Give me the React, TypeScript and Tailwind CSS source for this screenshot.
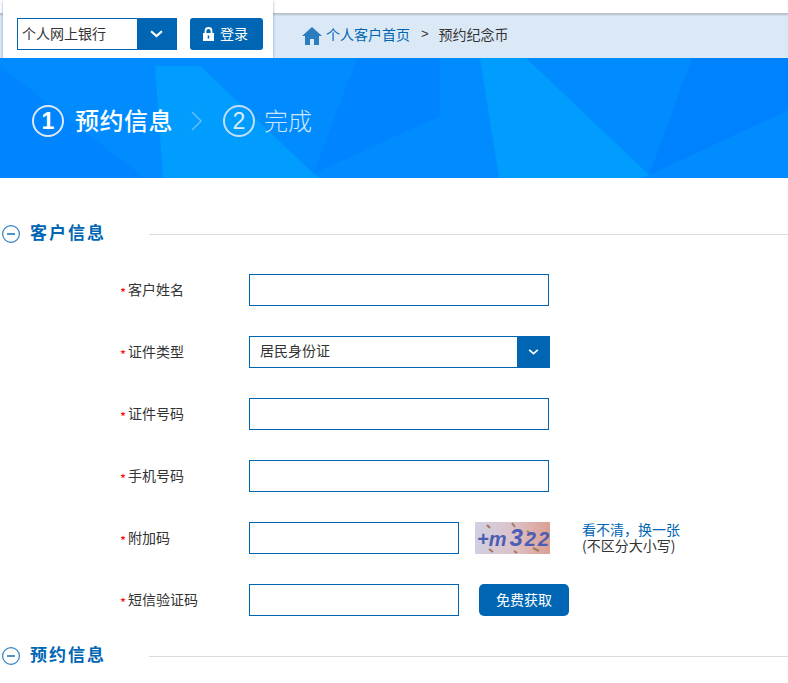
const fontStack = "font-['Noto_Sans_CJK_SC','Liberation_Sans',sans-serif]";

function FieldLabel({ text }: { text: string }) {
  return (
    <div className="flex w-[129px] items-center pb-[2px] text-sm text-[#333]">
      <span className="w-2 pt-[7px] text-[13px] leading-none text-[#f00]">*</span>
      <span>{text}</span>
    </div>
  );
}

function Chevron({ width, height }: { width: number; height: number }) {
  return (
    <svg width={width} height={height} viewBox="0 0 12 7">
      <path d="M1 1l5 4.5L11 1" fill="none" stroke="#fff" strokeWidth="2" />
    </svg>
  );
}

function SectionHead({ title }: { title: string }) {
  return (
    <div className="flex h-8 items-center pl-[2px]">
      <svg width="18" height="18" viewBox="0 0 18 18" className="shrink-0">
        <circle cx="9" cy="9" r="8.4" fill="none" stroke="#2f7fc4" strokeWidth="1.2" />
        <path d="M5 9h8" stroke="#0066b3" strokeWidth="1.4" />
      </svg>
      <h2 className="ml-[10px] w-[119px] pb-[4px] text-[17px] font-bold tracking-[2px] text-[#0066b3]">{title}</h2>
      <div className="h-px flex-1 bg-[#dcdcdc]" />
    </div>
  );
}

function TextInput({ width = 'w-[300px]' }: { width?: string }) {
  return <input className={`h-8 border border-[#0066b3] bg-white outline-none ${width}`} />;
}

function Captcha() {
  return (
    <div className="relative ml-4 h-8 w-[75px] overflow-hidden bg-gradient-to-r from-[#cfd0e2] via-[#dcc2ca] to-[#dc9f92]">
      <svg className="absolute inset-0" width="75" height="32" viewBox="0 0 75 32">
        <path d="M12 3l3 3M37 1l3 4M14 27l4 3M39 29l3 2M58 26l6 3M52 9l5 4" stroke="#a0785a" strokeWidth="2" />
      </svg>
      <div className="relative pl-[2px] font-['Liberation_Sans',sans-serif] text-[20px] leading-8 font-bold whitespace-nowrap text-[#4c5eb4] italic">
        +m<span className="ml-[3px] text-[24px]">3</span>
        <span className="ml-[2px]">2</span>
        <span className="ml-[2px]">2</span>
      </div>
    </div>
  );
}

const banner = [
  { fill: '#0084ff', points: '0,8 145,120 0,120' },
  { fill: '#009dff', points: '155,8 200,8 313,115 320,120 163,120' },
  { fill: '#0084ff', points: '357,0 440,0 440,58 313,116' },
  { fill: '#009dff', points: '480,0 526,0 649,117 640,120 499,120' },
  { fill: '#0082ff', points: '692,0 788,0 788,52 649,117' },
];

export default function App() {
  return (
    <div className={`relative min-h-[683px] w-[788px] overflow-hidden bg-white ${fontStack}`}>
      <header className="pt-[13px]">
        <div className="h-[3px] bg-gradient-to-b from-[#b3b7c3] to-[#d5e1ee]" />
        <nav className="flex h-[42px] items-center bg-[#dbe9f7] pb-[4px] pl-[302px] text-sm">
          <svg width="20" height="18" viewBox="0 0 20 18" className="mt-[2px]">
            <path d="M10 0L0 9h3v9h5v-6h4v6h5V9h3z" fill="#2a7ebf" />
          </svg>
          <a className="-mt-[2px] ml-1 text-[#0066b3]">个人客户首页</a>
          <span className="-mt-[2px] ml-[11px] font-['Liberation_Sans',sans-serif] text-[13px] text-[#333]">&gt;</span>
          <span className="-mt-[2px] ml-[10px] text-[#333]">预约纪念币</span>
        </nav>
      </header>

      {/* login box sits over the header */}
      <div className="absolute left-[3px] top-0 flex h-16 w-[270px] items-start rounded-b-md bg-white pl-[14px] pt-[18px] shadow-[0_1px_3px_rgba(0,60,120,0.45)]">
        <div className="flex h-8 w-40 border border-[#0066b3]">
          <span className="flex-1 pl-1 text-sm leading-[28px] text-[#333]">个人网上银行</span>
          <span className="flex w-[39px] items-center justify-center bg-[#0066b3]">
            <Chevron width={13} height={8} />
          </span>
        </div>
        <button className="ml-[13px] flex h-8 w-[73px] items-center rounded-[3px] bg-[#0066b3] pl-[13px] text-sm text-white">
          <svg width="11" height="14" viewBox="0 0 11 14">
            <path d="M2.5 6V4a3 3 0 016 0v2" fill="none" stroke="#fff" strokeWidth="1.8" />
            <path d="M0 6h11v8H0z" fill="#fff" />
            <path d="M4.7 8.5h1.6v3H4.7z" fill="#0066b3" />
          </svg>
          <span className="-mt-[3px] ml-[6px]">登录</span>
        </button>
      </div>

      <section className="relative h-[120px] bg-[#008cff]">
        <svg className="absolute inset-0" width="788" height="120" viewBox="0 0 788 120">
          {banner.map((shape) => (
            <polygon key={shape.points} points={shape.points} fill={shape.fill} />
          ))}
        </svg>
        <div className="relative flex h-full items-center pl-8 pt-[6px] text-2xl text-white">
          <span className="flex h-8 w-8 items-center justify-center rounded-full border-2 border-[#dfe9f5] font-['Liberation_Sans',sans-serif] text-[23px] font-bold">
            1
          </span>
          <span className="-mt-[2px] ml-[11px] font-medium tracking-[0.5px]">预约信息</span>
          <svg width="12" height="20" viewBox="0 0 12 20" className="ml-[18px]">
            <path d="M1 1l9 9-9 9" fill="none" stroke="#66bdfb" strokeWidth="1.5" />
          </svg>
          <span className="ml-5 flex h-8 w-8 items-center justify-center rounded-full border-2 border-[#c5def5] font-['Liberation_Sans',sans-serif] text-[23px] text-[#dcebf8]">
            2
          </span>
          <span className="-mt-[2px] ml-[9px] font-light text-[#cfe6fa]">完成</span>
        </div>
      </section>

      <main className="pt-10">
        <SectionHead title="客户信息" />
        <div className="mt-6 flex flex-col gap-[30px] pl-[120px]">
          <div className="flex items-center">
            <FieldLabel text="客户姓名" />
            <TextInput />
          </div>
          <div className="flex items-center">
            <FieldLabel text="证件类型" />
            <div className="flex h-8 w-[301px] border border-[#0066b3]">
              <span className="flex-1 pl-[10px] text-sm leading-[26px] text-[#333]">居民身份证</span>
              <span className="flex w-8 items-center justify-center bg-[#0066b3]">
                <Chevron width={11} height={6} />
              </span>
            </div>
          </div>
          <div className="flex items-center">
            <FieldLabel text="证件号码" />
            <TextInput />
          </div>
          <div className="flex items-center">
            <FieldLabel text="手机号码" />
            <TextInput />
          </div>
          <div className="flex items-center">
            <FieldLabel text="附加码" />
            <TextInput width="w-[210px]" />
            <Captcha />
            <div className="-mt-[2px] ml-8 text-sm leading-4">
              <a className="block text-[#0066b3]">{'看不清\uFF0C换一张'}</a>
              <span className="block text-[#333]">(不区分大小写)</span>
            </div>
          </div>
          <div className="flex items-center">
            <FieldLabel text="短信验证码" />
            <TextInput width="w-[210px]" />
            <button className="ml-5 h-8 w-[90px] rounded-[5px] bg-[#0066b3] pb-[2px] text-sm text-white">免费获取</button>
          </div>
        </div>
        <div className="mt-6">
          <SectionHead title="预约信息" />
        </div>
      </main>
    </div>
  );
}
